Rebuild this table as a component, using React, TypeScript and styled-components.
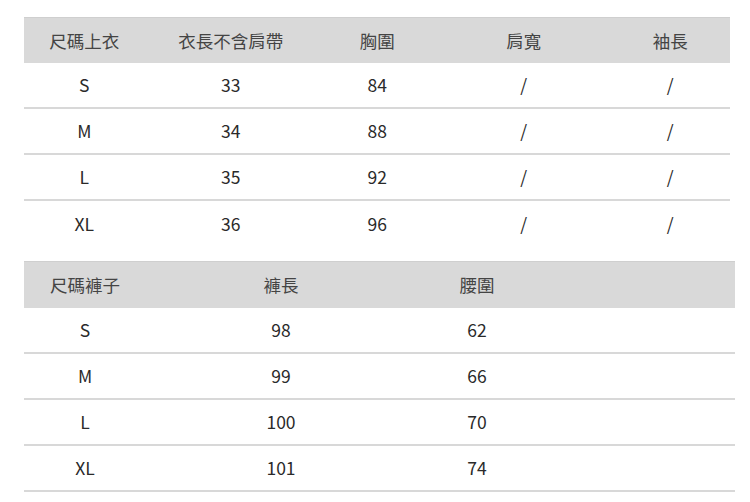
import React from "react";
import styled, { createGlobalStyle } from "styled-components";

const Global = createGlobalStyle`
  html, body { margin: 0; padding: 0; background: #ffffff; }
  body { font-family: "Noto Sans CJK TC", "Noto Sans", sans-serif; }
`;

const Page = styled.div`
  width: 750px;
  height: 502px;
  box-sizing: border-box;
  padding: 17px 0 0 24px;
  display: flex;
  flex-direction: column;
  gap: 14px;
  overflow: hidden;
`;

const Table = styled.div<{ $width: number }>`
  width: ${(p) => p.$width}px;
  display: flex;
  flex-direction: column;
`;

const Row = styled.div<{ $header?: boolean; $border?: boolean; $height: number }>`
  height: ${(p) => p.$height}px;
  box-sizing: border-box;
  background: ${(p) => (p.$header ? "#d9d9d9" : "#ffffff")};
  border-top: ${(p) => (p.$header ? "1px solid #cfcfcf" : "none")};
  border-bottom: ${(p) => (p.$border ? "2px solid #d8d8d8" : "none")};
  display: flex;
  overflow: visible;
`;

const Cells = styled.div<{ $cols: number; $colWidth: number; $offset: number }>`
  display: grid;
  grid-template-columns: repeat(${(p) => p.$cols}, ${(p) => p.$colWidth}px);
  margin-left: ${(p) => p.$offset}px;
  align-items: center;
  flex: none;
`;

const Cell = styled.div<{ $header?: boolean }>`
  text-align: center;
  font-size: 17.5px;
  line-height: 20px;
  color: ${(p) => (p.$header ? "#444444" : "#2a2a2a")};
`;

type T = {
  width: number;
  cols: number;
  colWidth: number;
  offset: number;
  headerHeight: number;
  header: string[];
  rows: string[][];
};

const tables: T[] = [
  {
    width: 706,
    cols: 5,
    colWidth: 146.5,
    offset: -13,
    headerHeight: 46,
    header: ["尺碼上衣", "衣長不含肩帶", "胸圍", "肩寬", "袖長"],
    rows: [
      ["S", "33", "84", "/", "/"],
      ["M", "34", "88", "/", "/"],
      ["L", "35", "92", "/", "/"],
      ["XL", "36", "96", "/", "/"],
    ],
  },
  {
    width: 711,
    cols: 4,
    colWidth: 196,
    offset: -37,
    headerHeight: 47,
    header: ["尺碼褲子", "褲長", "腰圍", ""],
    rows: [
      ["S", "98", "62", ""],
      ["M", "99", "66", ""],
      ["L", "100", "70", ""],
      ["XL", "101", "74", ""],
    ],
  },
];

function SizeTable({ t, lastBorder }: { t: T; lastBorder: boolean }) {
  return (
    <Table $width={t.width}>
      <Row $header $height={t.headerHeight}>
        <Cells $cols={t.cols} $colWidth={t.colWidth} $offset={t.offset}>
          {t.header.map((h, i) => (
            <Cell key={i} $header>
              {h}
            </Cell>
          ))}
        </Cells>
      </Row>
      {t.rows.map((r, ri) => (
        <Row key={ri} $height={46} $border={ri < t.rows.length - 1 || lastBorder}>
          <Cells $cols={t.cols} $colWidth={t.colWidth} $offset={t.offset}>
            {r.map((c, ci) => (
              <Cell key={ci}>{c}</Cell>
            ))}
          </Cells>
        </Row>
      ))}
    </Table>
  );
}

export default function App() {
  return (
    <>
      <Global />
      <Page>
        <SizeTable t={tables[0]} lastBorder={false} />
        <SizeTable t={tables[1]} lastBorder={true} />
      </Page>
    </>
  );
}
